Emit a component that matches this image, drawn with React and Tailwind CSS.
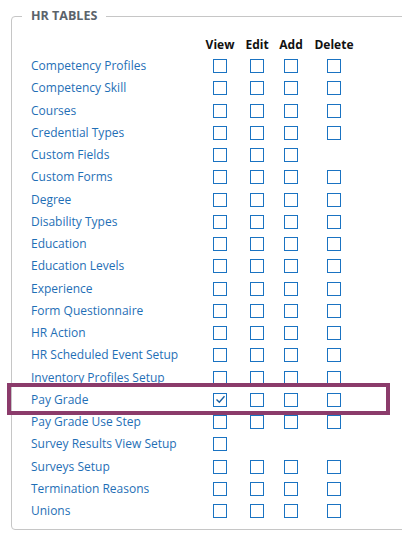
import React from "react";

const rows = [
  ["Competency Profiles", 4],
  ["Competency Skill", 4],
  ["Courses", 4],
  ["Credential Types", 4],
  ["Custom Fields", 3],
  ["Custom Forms", 4],
  ["Degree", 4],
  ["Disability Types", 4],
  ["Education", 4],
  ["Education Levels", 4],
  ["Experience", 4],
  ["Form Questionnaire", 4],
  ["HR Action", 4],
  ["HR Scheduled Event Setup", 4],
  ["Inventory Profiles Setup", 4],
  ["Pay Grade", 4, true],
  ["Pay Grade Use Step", 4],
  ["Survey Results View Setup", 1],
  ["Surveys Setup", 4],
  ["Termination Reasons", 4],
  ["Unions", 4],
];

function Box({ checked }) {
  return (
    <span className="w-[14px] h-[14px] border-[1.5px] border-[#1a73c2] bg-white flex items-center justify-center">
      {checked && (
        <svg width="11" height="11" viewBox="0 0 11 11">
          <path d="M1.5 5.5 L4.3 8.3 L9.5 2.2" fill="none" stroke="#1a5fa0" strokeWidth="1.4" />
        </svg>
      )}
    </span>
  );
}

function Cell({ show, checked }) {
  return <div className="flex justify-center items-center">{show ? <Box checked={checked} /> : null}</div>;
}

export default function App() {
  return (
    <div className="w-[402px] h-[540px] bg-white overflow-hidden relative" style={{ fontFamily: '"Open Sans", "Noto Sans", sans-serif' }}>
      <fieldset className="ml-[11px] mt-[7px] w-[420px] h-[523px] border border-[#c6c6c6] rounded-[4px] pl-[19px] pr-0 pb-0 pt-0 m-0">
        <legend className="-ml-[9px] px-[9px] text-[12.5px] font-bold text-[#5b636b] leading-[18px]">HR TABLES</legend>
        <div className="grid grid-cols-[173px_32px_42px_26px_60px] mt-[11px] h-[18px] items-center text-[12px] font-bold text-[#111] leading-[18px]">
          <div></div>
          <div className="text-center">View</div>
          <div className="text-center">Edit</div>
          <div className="text-center">Add</div>
          <div className="text-center">Delete</div>
        </div>
        <div className="mt-[1px]">
          {rows.map(([label, n, checked]) => (
            <div key={label} className="grid grid-cols-[173px_32px_42px_26px_60px] h-[22.25px] items-center text-[12px] text-[#1f6fb6]">
              <div className="whitespace-nowrap leading-[18px]">{label}</div>
              <Cell show={n >= 1} checked={checked} />
              <Cell show={n >= 2} />
              <Cell show={n >= 3} />
              <Cell show={n >= 4} />
            </div>
          ))}
        </div>
      </fieldset>
      <div className="absolute left-[7px] top-[383px] w-[383px] h-[32px] border-[4px] border-[#8b3b6b] pointer-events-none"></div>
    </div>
  );
}
